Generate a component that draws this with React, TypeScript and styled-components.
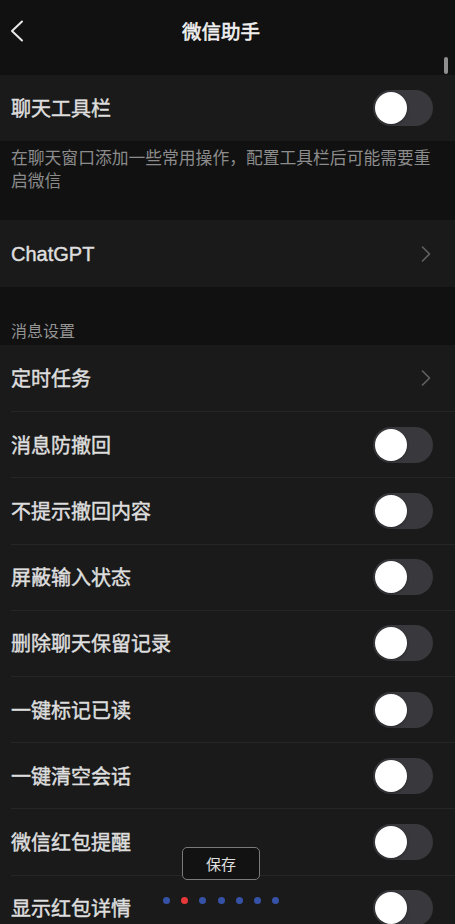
import React from "react";
import styled, { createGlobalStyle } from "styled-components";

const GlobalStyle = createGlobalStyle`
  html, body {
    margin: 0;
    padding: 0;
    background: #111111;
    overflow: hidden;
  }
  body {
    font-family: "Noto Sans CJK SC", "Liberation Sans", "Noto Sans", sans-serif;
    color: #e6e6e6;
    -webkit-font-smoothing: antialiased;
  }
  * { box-sizing: border-box; }
`;

const Page = styled.div`
  width: 455px;
  min-height: 924px;
  background: #111111;
  display: flex;
  flex-direction: column;
`;

const Header = styled.header`
  height: 60px;
  display: grid;
  grid-template-columns: 1fr auto 1fr;
  align-items: center;
  padding: 0 23px 0 10px;
  margin-bottom: 15px;
`;

const BackButton = styled.button`
  justify-self: start;
  width: 14px;
  height: 22px;
  padding: 0;
  border: none;
  background: none;
  display: flex;
  align-items: center;
  margin-top: 2px;
`;

const Title = styled.h1`
  margin: 0;
  font-size: 19.5px;
  font-weight: 400;
  -webkit-text-stroke: 0.6px #f0f0f0;
  color: #f0f0f0;
  letter-spacing: 0;
  line-height: 1;
  margin-top: 1px;
`;

const Card = styled.section`
  background: #1a1a1a;
`;

const Row = styled.div<{ $h?: number }>`
  height: ${(p) => p.$h ?? 66}px;
  padding-left: 11px;
  display: flex;
`;

const RowInner = styled.div<{ $divider?: boolean; $pr?: number }>`
  flex: 1;
  display: flex;
  align-items: center;
  justify-content: space-between;
  padding-right: ${(p) => p.$pr ?? 22}px;
  border-top: ${(p) => (p.$divider ? "1px solid #262626" : "none")};
`;

const Label = styled.span<{ $latin?: boolean }>`
  font-size: 20px;
  font-weight: 400;
  color: #dedede;
  -webkit-text-stroke: 0.45px #dedede;
  font-family: ${(p) =>
    p.$latin
      ? `"Liberation Sans", Arial, sans-serif`
      : `"Noto Sans CJK SC", "Liberation Sans", sans-serif`};
  line-height: 1;
`;

const Description = styled.p`
  margin: 0;
  padding: 5px 11px 0 11px;
  height: 79px;
  font-size: 16.8px;
  line-height: 22.5px;
  color: #8c8c8c;
`;

const SectionTitle = styled.div`
  padding: 32px 11px 0 11px;
  height: 58px;
  font-size: 16px;
  line-height: 22px;
  color: #949494;
`;

const Track = styled.div<{ $on?: boolean }>`
  width: 60px;
  height: 36px;
  border-radius: 18px;
  background: ${(p) => (p.$on ? "#07c160" : "#39393d")};
  padding: 2px;
  display: flex;
  justify-content: ${(p) => (p.$on ? "flex-end" : "flex-start")};
  flex-shrink: 0;
`;

const Knob = styled.div`
  width: 32px;
  height: 32px;
  border-radius: 50%;
  background: #ffffff;
  box-shadow: 0 1px 3px rgba(0, 0, 0, 0.3);
`;

const ScrollThumb = styled.div`
  position: fixed;
  top: 57px;
  left: 444px;
  width: 4px;
  height: 17px;
  border-radius: 2px;
  background: #8f8f8f;
`;

const Overlay = styled.div`
  position: fixed;
  left: 0;
  top: 847px;
  width: 442px;
  display: flex;
  flex-direction: column;
  align-items: center;
  gap: 17px;
  pointer-events: none;
`;

const SaveButton = styled.button`
  width: 78px;
  height: 33px;
  border: 1.5px solid #7a7a7a;
  border-radius: 5px;
  background: #121212;
  color: #e0e0e0;
  font-family: "Noto Sans CJK SC", "Liberation Sans", sans-serif;
  font-size: 15px;
  line-height: 1;
  padding: 0;
  padding-bottom: 1px;
`;

const Dots = styled.div`
  display: flex;
  gap: 11.2px;
`;

const Dot = styled.span<{ $active?: boolean }>`
  width: 7px;
  height: 7px;
  border-radius: 50%;
  background: ${(p) => (p.$active ? "#e63838" : "#3552a6")};
`;

const Toggle = ({ on }: { on?: boolean }) => (
  <Track $on={on}>
    <Knob />
  </Track>
);

const Chevron = () => (
  <svg width="10" height="16" viewBox="0 0 10 16" fill="none">
    <polyline
      points="1.5,1 8.5,8 1.5,15"
      stroke="#626262"
      strokeWidth="1.6"
      strokeLinecap="round"
      strokeLinejoin="round"
    />
  </svg>
);

const BackIcon = () => (
  <svg width="14" height="22" viewBox="0 0 14 22" fill="none">
    <polyline
      points="12,1.5 2,11 12,20.5"
      stroke="#e8e8e8"
      strokeWidth="2"
      strokeLinecap="round"
      strokeLinejoin="round"
    />
  </svg>
);

const messageItems: { label: string; arrow?: boolean }[] = [
  { label: "定时任务", arrow: true },
  { label: "消息防撤回" },
  { label: "不提示撤回内容" },
  { label: "屏蔽输入状态" },
  { label: "删除聊天保留记录" },
  { label: "一键标记已读" },
  { label: "一键清空会话" },
  { label: "微信红包提醒" },
  { label: "显示红包详情" },
];

export default function App() {
  return (
    <>
      <GlobalStyle />
      <Page>
        <Header>
          <BackButton aria-label="返回">
            <BackIcon />
          </BackButton>
          <Title>微信助手</Title>
          <span />
        </Header>

        <Card>
          <Row>
            <RowInner>
              <Label>聊天工具栏</Label>
              <Toggle />
            </RowInner>
          </Row>
        </Card>
        <Description>
          在聊天窗口添加一些常用操作，配置工具栏后可能需要重启微信
        </Description>

        <Card>
          <Row $h={67}>
            <RowInner $pr={24}>
              <Label $latin>ChatGPT</Label>
              <Chevron />
            </RowInner>
          </Row>
        </Card>

        <SectionTitle>消息设置</SectionTitle>

        <Card>
          {messageItems.map((item, i) => (
            <Row key={item.label} $h={66.2}>
              <RowInner $divider={i > 0} $pr={item.arrow ? 24 : 22}>
                <Label>{item.label}</Label>
                {item.arrow ? <Chevron /> : <Toggle />}
              </RowInner>
            </Row>
          ))}
        </Card>
      </Page>

      <ScrollThumb />
      <Overlay>
        <SaveButton>保存</SaveButton>
        <Dots>
          {Array.from({ length: 7 }).map((_, i) => (
            <Dot key={i} $active={i === 1} />
          ))}
        </Dots>
      </Overlay>
    </>
  );
}
